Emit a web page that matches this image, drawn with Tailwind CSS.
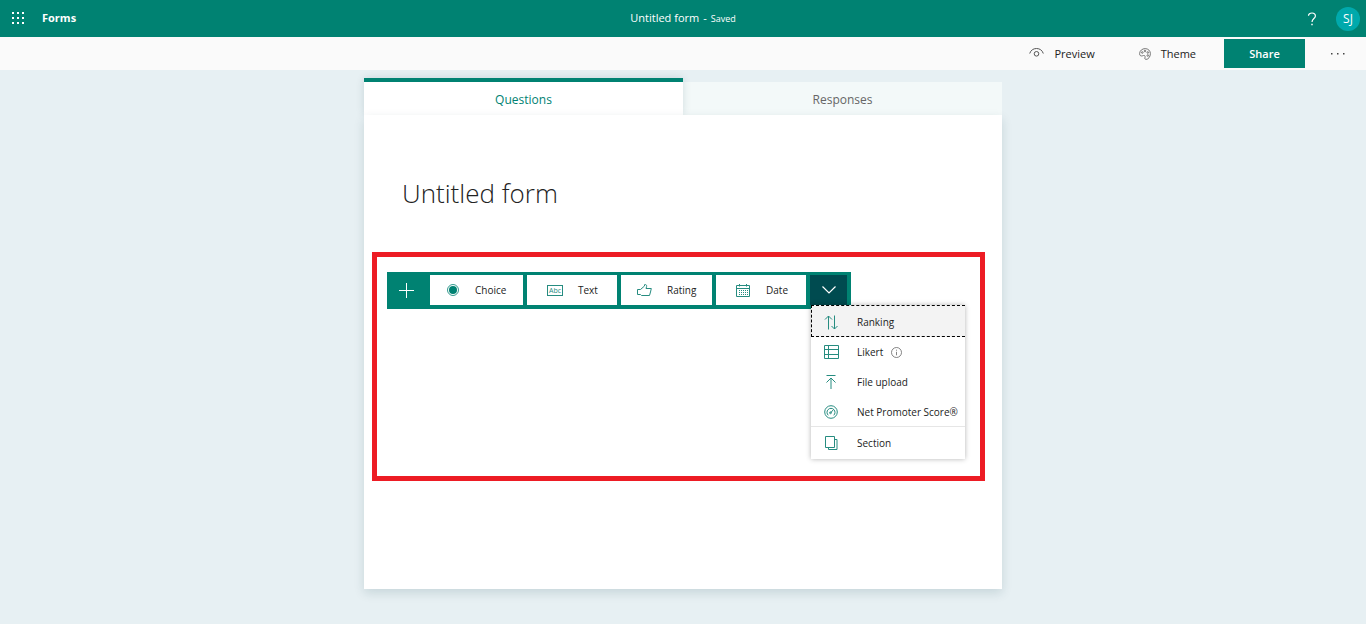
<!DOCTYPE html>
<html lang="en">
<head>
<meta charset="utf-8">
<meta name="viewport" content="width=device-width, initial-scale=1">
<title>Untitled form - Forms</title>
<script src="https://cdn.jsdelivr.net/npm/@tailwindcss/browser@4"></script>
</head>
<body class="flex min-h-screen flex-col bg-[#e7f0f3] font-['Open_Sans',sans-serif] text-[11px] leading-4 text-[#222222]">
<header class="grid h-[37px] shrink-0 grid-cols-[1fr_auto_1fr] items-center bg-[#008272] text-white">
  <div class="flex items-center gap-[18px] pb-px pl-3">
    <button type="button" aria-label="App launcher">
      <svg class="size-3" viewBox="0 0 12 12" fill="currentColor"><path d="M0 0h2v2H0zM5 0h2v2H5zM10 0h2v2h-2zM0 5h2v2H0zM5 5h2v2H5zM10 5h2v2h-2zM0 10h2v2H0zM5 10h2v2H5zM10 10h2v2h-2z"/></svg>
    </button>
    <a href="#" class="text-[11px] font-bold">Forms</a>
  </div>
  <p class="flex items-baseline gap-1"><span>Untitled form</span><span>-</span><span class="text-[9px]">Saved</span></p>
  <div class="flex items-center justify-end gap-[19px] pr-1.5">
    <button type="button" aria-label="Help">
      <svg class="h-3.5 w-2.5" viewBox="0 0 10 14" fill="none" stroke="currentColor" stroke-width="1.2"><path d="M1.5 3.8C1.5 2 3 1 5 1s3.4 1 3.4 2.9C8.400 6.500 5 6.500 5 10"/><path d="M5 11.700v1.600" stroke-width="1.500"/></svg>
    </button>
    <button type="button" class="size-6 rounded-full bg-[#00a9ac] text-xs" aria-label="Account SJ">SJ</button>
  </div>
</header>
<nav class="flex h-[33px] shrink-0 items-center justify-end bg-[#fafafa]" aria-label="Form actions">
  <button type="button" class="flex items-center gap-2.5 px-[22px]">
    <svg class="h-3 w-[15px]" viewBox="0 0 15 12" fill="none" stroke="#555555"><path d="M.7 5.500C1.800 2.200 4.300.5 7.500.5s5.700 1.700 6.800 5"/><circle cx="7.500" cy="5.800" r="2.300"/></svg>
    Preview</button>
  <button type="button" class="flex items-center gap-2.5 px-[22px]">
    <svg class="size-3" viewBox="0 0 12 12" fill="none" stroke="#666666" stroke-width=".9"><path d="M.6 5.500C.8 2.600 3.300.6 6.200.6c3 0 5.200 2.300 5.200 5 0 3-2 5.800-4.300 5.800-1.300 0-1.500-1-1.100-2 .4-1.200-.2-2.200-1.400-1.900-1.200.3-1.900.7-3 .3C.9 7.500.5 6.500.6 5.500z"/><circle cx="3.300" cy="4.500" r=".8"/><circle cx="6" cy="3" r=".8"/><circle cx="8.800" cy="4.500" r=".8"/><circle cx="8.800" cy="7.500" r=".8"/></svg>
    Theme</button>
  <button type="button" class="ml-1.5 h-[29px] w-[81px] bg-[#008272] font-semibold text-white">Share</button>
  <button type="button" class="flex w-[61px] justify-center pl-1" aria-label="More options">
    <svg class="h-1 w-3.5" viewBox="0 0 14 4" fill="#444444"><path d="M0 1h1.500v1.500H0zM6 1h1.500v1.500H6zM12 1h1.500v1.500H12z"/></svg>
  </button>
</nav>
<main class="mx-auto mt-2 mb-[35px] flex w-full max-w-[638px] grow flex-col">
  <div class="grid grid-cols-2 items-end text-xs" role="tablist">
    <button type="button" role="tab" aria-selected="true" class="h-[37px] border-t-4 border-[#008272] bg-white pt-0.5 text-[#008272] shadow-[0_0_8px_rgba(0,60,70,0.14)] relative">Questions</button>
    <button type="button" role="tab" aria-selected="false" class="h-[33px] bg-[#f3f9f9] pt-0.5 text-[#666666]">Responses</button>
  </div>
  <section class="relative grow bg-white px-2 pt-[60px] pb-[108px] shadow-[0_4px_10px_rgba(0,60,70,0.14)]">
    <h1 class="pl-[30px] text-[26px] leading-9 font-light">Untitled form</h1>
    <div class="mt-[41px] mr-[9px] min-h-[229px] border-[5px] border-[#ed1c24] px-2.5 pt-[15px] text-[10px]">
      <div class="flex w-fit bg-[#008272] pt-[3px] pr-1 pb-1" role="toolbar" aria-label="Add question">
        <button type="button" class="flex w-[43px] items-center justify-center pr-1 text-white" aria-label="Add new">
          <svg class="size-[15px]" viewBox="0 0 15 15" stroke="currentColor"><path d="M7.500 0v15M0 7.500h15"/></svg>
        </button>
        <div class="flex gap-1">
          <button type="button" class="flex h-[30px] w-[93px] items-center gap-4 bg-white pl-[17px]">
            <svg class="size-3" viewBox="0 0 12 12"><circle cx="6" cy="6" r="5.500" fill="none" stroke="#008272" stroke-width=".8"/><circle cx="6" cy="6" r="4" fill="#008272"/></svg>
            Choice</button>
          <button type="button" class="flex w-[90px] items-center gap-[15px] bg-white pl-5">
            <svg class="h-[11px] w-4" viewBox="0 0 16 11"><rect x=".5" y=".5" width="15" height="10" fill="none" stroke="#268c80"/><text x="8" y="8" text-anchor="middle" font-size="7" fill="#268c80">Abc</text></svg>
            Text</button>
          <button type="button" class="flex w-[91px] items-center gap-[15px] bg-white pl-4">
            <svg class="h-[13px] w-[15px]" viewBox="0 0 15 13" fill="none" stroke="#268c80"><path d="M.5 5.500h3L7.500 2V.7c1.600-.5 2.400.5 2.100 1.800L9 4.500h5.300L13.500 8l-1 3.500H4.500l-1-1h-3z"/></svg>
            Rating</button>
          <button type="button" class="flex w-[90px] items-center gap-4 bg-white pl-5">
            <svg class="h-[13px] w-[14px]" viewBox="0 0 14 13" fill="none" stroke="#268c80"><path d="M.5 1.500h13v11H.5zM.5 4.500h13M3.500 0v2.500M10.500 0v2.500"/><path d="M3 6.500h9M3 8.500h9M3 10.500h9" stroke-dasharray="1 1"/></svg>
            Date</button>
          <div class="relative flex">
            <button type="button" aria-label="More question types" aria-expanded="true" class="flex w-[37px] items-center justify-center bg-[#004b50] text-white">
              <svg class="h-2 w-3.5" viewBox="0 0 14 8" fill="none" stroke="currentColor" stroke-width="1.200"><path d="M.5.500 7 7 13.500.5"/></svg>
            </button>
            <div role="menu" class="absolute top-[30px] left-px z-10 w-[154px] bg-white shadow-[0_0_5px_rgba(0,0,0,0.3)]">
              <button type="button" role="menuitem" class="flex h-8 w-full items-center gap-[18px] border border-r-0 border-dashed border-black bg-[#f3f3f3] pt-0.5 pl-3">
                <svg class="size-[15px] shrink-0" viewBox="0 0 15 15" fill="none"><path d="M4.500 14.500V1M1 4.500 4.500 1 8 4.500" stroke="#268c80"/><path d="M10.500.500V14M7.500 11l3 3 3-3" stroke="#268c80"/></svg>
                Ranking</button>
              <button type="button" role="menuitem" class="flex h-[30px] w-full items-center gap-[18px] pl-[13px]">
                <svg class="h-3.5 w-[15px] shrink-0" viewBox="0 0 15 14" fill="none" stroke="#268c80"><path d="M.5.500h14v13H.5zM4.500.500v13M.5 4.500h14M.5 9.500h14"/></svg>
                <span class="flex items-center gap-2">Likert
                <svg class="size-[11px]" viewBox="0 0 11 11" fill="none" stroke="#666666" stroke-width=".8"><circle cx="5.500" cy="5.500" r="5"/><path d="M5.500 4.800v3.500M5.500 2.700v1"/></svg></span></button>
              <button type="button" role="menuitem" class="flex h-[30px] w-full items-center gap-[18px] pl-[13px]">
                <svg class="h-3.5 w-[15px] shrink-0" viewBox="0 0 15 14" fill="none" stroke="#268c80"><path d="M2.500.500h9M7 14V3M2.500 7.500 7 3l4.500 4.500"/></svg>
                File upload</button>
              <button type="button" role="menuitem" class="flex h-[29px] w-full items-center gap-[18px] pl-[13px] whitespace-nowrap">
                <svg class="h-3.5 w-[15px] shrink-0" viewBox="0 0 15 14" fill="none" stroke="#268c80"><circle cx="7" cy="7" r="6.300"/><path d="M4.300 10.300A4 4 0 1 1 9.700 10.300M6.500 8 9.500 4.500"/><circle cx="6.500" cy="7.800" r=".9"/></svg>
                Net Promoter Score®</button>
              <button type="button" role="menuitem" class="flex h-[33px] w-full items-center gap-[18px] border-t border-[#e6e6e6] pl-[13px]">
                <svg class="h-3.5 w-[15px] shrink-0" viewBox="0 0 15 14" fill="none" stroke="#268c80"><path d="M1.500.500h9v11h-9zM10.500 3.500h2.500v10H4.500v-2"/></svg>
                Section</button>
            </div>
          </div>
        </div>
      </div>
    </div>
  </section>
</main>
</body>
</html>
